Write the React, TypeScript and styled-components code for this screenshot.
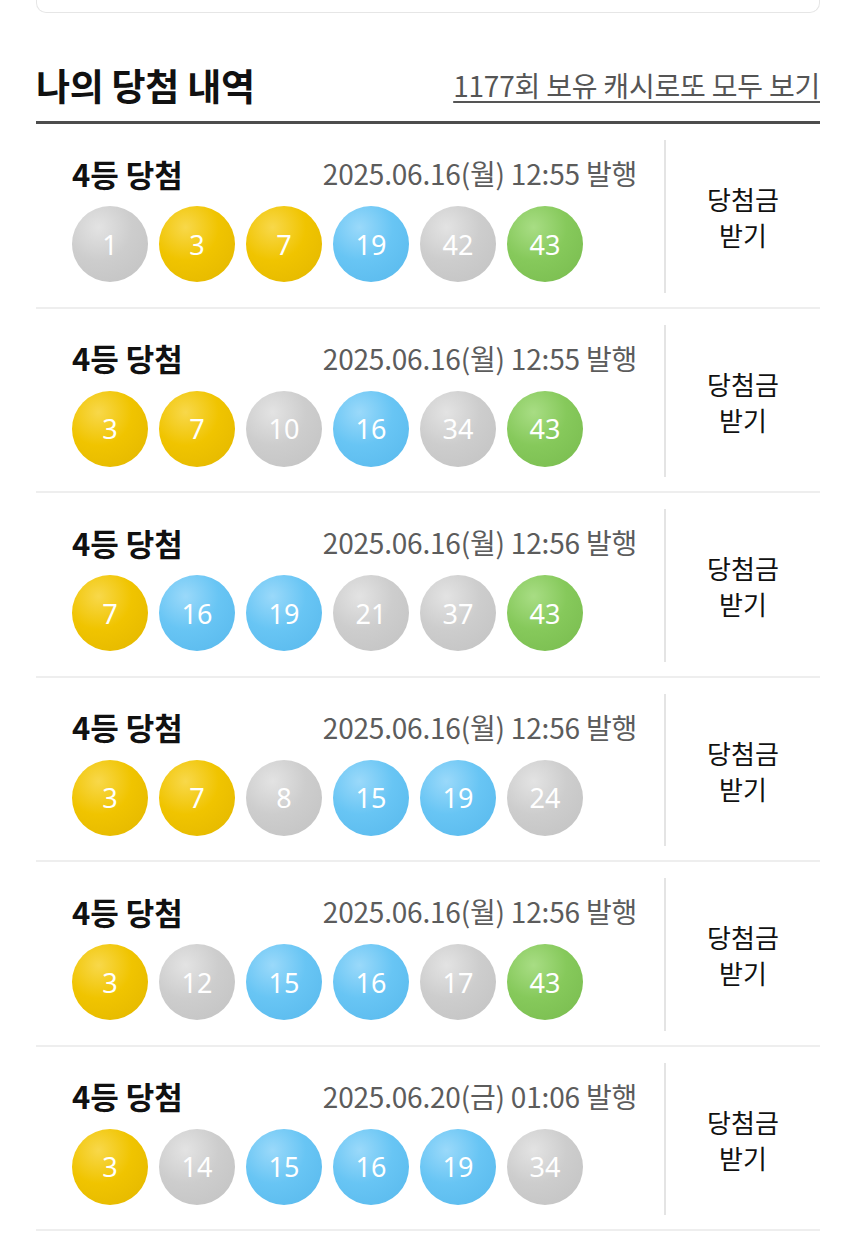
import React from 'react'
import styled, { createGlobalStyle } from 'styled-components'

const GlobalStyle = createGlobalStyle`
  html, body {
    margin: 0;
    padding: 0;
    background: #ffffff;
    font-family: 'Noto Sans CJK KR', 'Noto Sans', sans-serif;
    color: #111111;
  }
`

const Page = styled.div`
  width: 856px;
  padding: 0 36px;
  box-sizing: border-box;
`

const TopCard = styled.div`
  height: 12px;
  border: 1px solid #e6e6e6;
  border-top: none;
  border-radius: 0 0 10px 10px;
`

const Header = styled.div`
  display: flex;
  align-items: center;
  justify-content: space-between;
  margin-top: 50px;
  padding-bottom: 14px;
  border-bottom: 3px solid #4d4d4d;
  > h2 {
    margin: 0;
    font-size: 37px;
    line-height: 44px;
    font-weight: 700;
    letter-spacing: -0.3px;
    color: #111;
  }
  > a {
    font-size: 28px;
    line-height: 44px;
    color: #555;
    text-decoration: underline;
    text-underline-offset: 4px;
    text-decoration-thickness: 2px;
    letter-spacing: -0.2px;
  }
`

const Row = styled.div`
  display: flex;
  border-bottom: 2px solid #eeeeee;
`

const Info = styled.div`
  flex: 1;
  padding: 31px 27px 24.5px 36px;
`

const TitleLine = styled.div`
  display: flex;
  align-items: center;
  justify-content: space-between;
  height: 36px;
  > strong {
    font-size: 31px;
    font-weight: 700;
    color: #111;
  }
  > span {
    font-size: 28px;
    color: #5c5c5c;
    letter-spacing: -0.2px;
  }
`

const Balls = styled.div`
  display: flex;
  gap: 11px;
  margin-top: 15px;
`

const palette = {
  yellow: ['#f8d84a', '#f0c400', '#e2b600'],
  blue: ['#9ad9fa', '#68c5f4', '#57b8ec'],
  green: ['#a8dd84', '#86c95b', '#78bb4e'],
  gray: ['#e3e3e3', '#cdcdcd', '#c2c2c2'],
}

type Tone = keyof typeof palette

const Ball = styled.div<{ $tone: Tone }>`
  width: 76px;
  height: 76px;
  border-radius: 50%;
  display: flex;
  align-items: center;
  justify-content: center;
  font-family: 'Noto Sans', 'Open Sans', sans-serif;
  font-size: 27px;
  color: #ffffff;
  background: ${(p) =>
    `radial-gradient(circle at 35% 28%, ${palette[p.$tone][0]} 0%, ${palette[p.$tone][1]} 45%, ${palette[p.$tone][2]} 100%)`};
`

const Claim = styled.div`
  width: 154px;
  margin: 16px 0 14px;
  border-left: 2px solid #e4e4e4;
  display: flex;
  align-items: center;
  justify-content: center;
  text-align: center;
  font-size: 26px;
  line-height: 36px;
  color: #111;
  padding-top: 2px;
`

const winning = new Set([3, 7, 15, 16, 19, 43])

const toneOf = (n: number): Tone => {
  if (!winning.has(n)) return 'gray'
  if (n <= 10) return 'yellow'
  if (n <= 20) return 'blue'
  if (n >= 41) return 'green'
  return 'gray'
}

const tickets = [
  { date: '2025.06.16(월) 12:55 발행', nums: [1, 3, 7, 19, 42, 43] },
  { date: '2025.06.16(월) 12:55 발행', nums: [3, 7, 10, 16, 34, 43] },
  { date: '2025.06.16(월) 12:56 발행', nums: [7, 16, 19, 21, 37, 43] },
  { date: '2025.06.16(월) 12:56 발행', nums: [3, 7, 8, 15, 19, 24] },
  { date: '2025.06.16(월) 12:56 발행', nums: [3, 12, 15, 16, 17, 43] },
  { date: '2025.06.20(금) 01:06 발행', nums: [3, 14, 15, 16, 19, 34] },
]

export default function App() {
  return (
    <>
      <GlobalStyle />
      <Page>
        <TopCard />
        <Header>
          <h2>나의 당첨 내역</h2>
          <a>1177회 보유 캐시로또 모두 보기</a>
        </Header>
        {tickets.map((t, i) => (
          <Row key={i}>
            <Info>
              <TitleLine>
                <strong>4등 당첨</strong>
                <span>{t.date}</span>
              </TitleLine>
              <Balls>
                {t.nums.map((n) => (
                  <Ball key={n} $tone={toneOf(n)}>
                    {n}
                  </Ball>
                ))}
              </Balls>
            </Info>
            <Claim>
              당첨금
              <br />
              받기
            </Claim>
          </Row>
        ))}
      </Page>
    </>
  )
}
